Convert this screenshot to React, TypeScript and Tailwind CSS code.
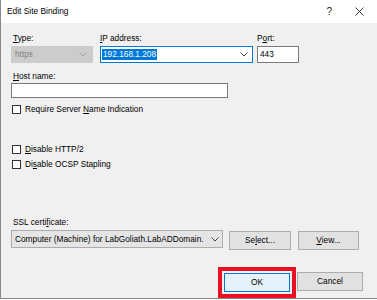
import React from "react";

const Chevron: React.FC<{ color?: string }> = ({ color = "#444" }) => (
  <svg width="8" height="5" viewBox="0 0 8 5" className="shrink-0">
    <polyline points="0.5,0.5 4,4 7.5,0.5" fill="none" stroke={color} strokeWidth="1" />
  </svg>
);

const Check: React.FC<{ children: React.ReactNode; className?: string }> = ({ children, className }) => (
  <div className={`flex h-[13px] items-center pl-[11px] ${className ?? ""}`}>
    <div className="h-[9px] w-[9px] border border-[#333] bg-white" />
    <span className="ml-[4px] leading-[13px]">{children}</span>
  </div>
);

const App: React.FC = () => {
  return (
    <div
      className="flex h-[299px] w-[377px] flex-col overflow-hidden border-b border-l border-[#888] bg-[#f0f0f0] text-[8.3px] text-black"
      style={{ fontFamily: '"Liberation Sans", Arial, sans-serif' }}
    >
      {/* title bar */}
      <div className="flex h-[23px] shrink-0 items-center bg-white pl-[6px]">
        <span className="text-[8.4px]">Edit Site Binding</span>
        <span className="ml-auto mr-[23px] text-[10px] text-[#222]">?</span>
        <svg width="9" height="9" viewBox="0 0 9 9" className="mr-[13px]">
          <path d="M0.5 0.5 L8.5 8.5 M8.5 0.5 L0.5 8.5" stroke="#222" strokeWidth="0.9" />
        </svg>
      </div>

      {/* type / ip / port */}
      <div className="mt-[10px] flex">
        <div className="ml-[10px] flex w-[82px] flex-col">
          <span className="pl-[2px] leading-[11px]">
            <u>T</u>ype:
          </span>
          <div className="mt-[2px] flex h-[17px] items-center border border-[#ccc] bg-[#cccccc] pl-[3px] pr-[5px] text-[#838383]">
            <span>https</span>
            <span className="ml-auto">
              <Chevron color="#a0a0a0" />
            </span>
          </div>
        </div>
        <div className="ml-[7px] flex w-[153px] flex-col">
          <span className="leading-[11px]">
            <u>I</u>P address:
          </span>
          <div className="mt-[2px] flex h-[17px] items-center border border-[#0078d7] bg-white pl-[1px] pr-[4px]">
            <span className="bg-[#0078d7] px-[1px] leading-[11px] text-white">192.168.1.208</span>
            <span className="ml-auto">
              <Chevron />
            </span>
          </div>
        </div>
        <div className="ml-[4px] flex w-[42px] flex-col">
          <span className="leading-[11px]">
            P<u>o</u>rt:
          </span>
          <div className="mt-[2px] flex h-[17px] items-center border border-[#7a7a7a] bg-white pl-[2px]">
            443
          </div>
        </div>
      </div>

      {/* host name */}
      <span className="ml-[12px] mt-[8px] leading-[11px]">
        <u>H</u>ost name:
      </span>
      <div className="ml-[10px] mt-[1px] h-[16px] w-[217px] border border-[#7a7a7a] bg-white" />

      <Check className="mt-[5px]">
        Require Server <u>N</u>ame Indication
      </Check>
      <Check className="mt-[27px]">
        <u>D</u>isable HTTP/2
      </Check>
      <Check className="mt-[2px]">
        Di<u>s</u>able OCSP Stapling
      </Check>

      {/* ssl certificate */}
      <span className="ml-[12px] mt-[46px] leading-[11px]">
        SSL certi<u>f</u>icate:
      </span>
      <div className="mt-[2px] flex items-start">
        <div className="ml-[10px] flex h-[18px] w-[212px] items-center border border-[#adadad] bg-[#e5e5e5] pl-[3px] pr-[3px]">
          <span className="overflow-hidden whitespace-nowrap">Computer (Machine) for LabGoliath.LabADDomain.</span>
          <span className="ml-auto pl-[2px]">
            <Chevron />
          </span>
        </div>
        <button className="ml-[6px] mt-[1px] h-[19px] w-[62px] border border-[#adadad] bg-[#e1e1e1]">
          Se<u>l</u>ect...
        </button>
        <button className="ml-[7px] mt-[1px] h-[19px] w-[61px] border border-[#adadad] bg-[#e1e1e1]">
          <u>V</u>iew...
        </button>
      </div>

      {/* ok / cancel */}
      <div className="mt-[17px] flex items-start">
        <div className="ml-[217px] flex h-[31px] w-[78px] items-center justify-center border-[4px] border-[#e81123]">
          <button className="h-[19px] w-[66px] border border-[#0078d7] bg-[#e5f1fb]">OK</button>
        </div>
        <button className="ml-[1px] mt-[5px] h-[19px] w-[66px] border border-[#adadad] bg-[#e1e1e1]">Cancel</button>
      </div>
    </div>
  );
};

export default App;
